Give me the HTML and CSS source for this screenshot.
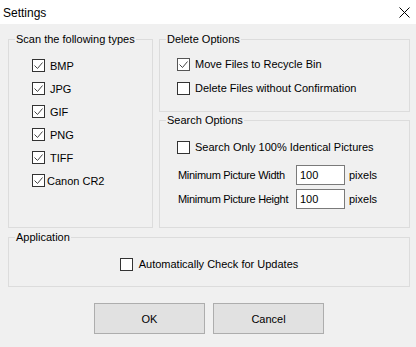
FILE: index.html
```html
<!DOCTYPE html>
<html lang="en">
<head>
  <meta charset="UTF-8" />
  <title>Settings</title>
  <link rel="stylesheet" href="styles.css">
</head>
<body>

  <div class="titlebar">
    <span class="title">Settings</span>
    <svg class="close" width="11" height="11" viewBox="0 0 11 11">
      <path d="M0.5 0.5 L10.5 10.5 M10.5 0.5 L0.5 10.5" stroke="#000" stroke-width="1" fill="none" />
    </svg>
  </div>

  <div class="dialog">
    <div class="top">
      <!-- Tipos de archivo -->
      <fieldset class="group types">
        <legend>Scan the following types</legend>
        <div class="list">
          <label class="opt"><span class="box"><svg viewBox="0 0 11 11"><path d="M1.5 5.5 L4.5 8.5 L9.5 2.5" /></svg></span>BMP</label>
          <label class="opt"><span class="box"><svg viewBox="0 0 11 11"><path d="M1.5 5.5 L4.5 8.5 L9.5 2.5" /></svg></span>JPG</label>
          <label class="opt"><span class="box"><svg viewBox="0 0 11 11"><path d="M1.5 5.5 L4.5 8.5 L9.5 2.5" /></svg></span>GIF</label>
          <label class="opt"><span class="box"><svg viewBox="0 0 11 11"><path d="M1.5 5.5 L4.5 8.5 L9.5 2.5" /></svg></span>PNG</label>
          <label class="opt"><span class="box"><svg viewBox="0 0 11 11"><path d="M1.5 5.5 L4.5 8.5 L9.5 2.5" /></svg></span>TIFF</label>
          <label class="opt tight"><span class="box"><svg viewBox="0 0 11 11"><path d="M1.5 5.5 L4.5 8.5 L9.5 2.5" /></svg></span>Canon CR2</label>
        </div>
      </fieldset>

      <div class="side">
        <fieldset class="group delete">
          <legend>Delete Options</legend>
          <div class="list">
            <label class="opt"><span class="box soft"><svg viewBox="0 0 11 11"><path d="M1.5 5.5 L4.5 8.5 L9.5 2.5" /></svg></span>Move Files to Recycle Bin</label>
            <label class="opt"><span class="box"></span>Delete Files without Confirmation</label>
          </div>
        </fieldset>

        <fieldset class="group search">
          <legend>Search Options</legend>
          <div class="list">
            <label class="opt"><span class="box"></span>Search Only 100% Identical Pictures</label>
            <div class="field">
              <span class="field-label">Minimum Picture Width</span>
              <input type="text" value="100" />
              <span>pixels</span>
            </div>
            <div class="field">
              <span class="field-label">Minimum Picture Height</span>
              <input type="text" value="100" />
              <span>pixels</span>
            </div>
          </div>
        </fieldset>
      </div>
    </div>

    <fieldset class="group app">
      <legend>Application</legend>
      <div class="list centered">
        <label class="opt"><span class="box"></span>Automatically Check for Updates</label>
      </div>
    </fieldset>

    <div class="buttons">
      <button>OK</button>
      <button>Cancel</button>
    </div>
  </div>

</body>
</html>
```

FILE: styles.css
```css
body {
  font-family: 'Liberation Sans', Arial, sans-serif;
  font-size: 11px;
  color: #000;
  background-color: #f0f0f0;
  margin: 0;
  padding: 0;
  width: 416px;
  height: 347px;
  overflow: hidden;
}
.titlebar {
  height: 24px;
  background: white;
  display: flex;
  align-items: center;
  justify-content: space-between;
  padding: 0 6px 0 3px;
}
.title {
  font-size: 12px;
  padding-top: 1px;
}
.close {
  display: block;
  margin-top: 1px;
}
.dialog {
  padding: 8px 6px 0 8px;
}
.top {
  display: flex;
  gap: 6px;
}
.group {
  margin: 0;
  padding: 0;
  min-width: 0;
  border: 1px solid #dcdcdc;
  box-sizing: border-box;
}
.group legend {
  margin-left: 6px;
  padding: 0 1px;
  line-height: 14px;
}
.types {
  width: 145px;
  height: 196px;
}
.types .list {
  padding: 8px 0 0 23px;
}
.types .opt {
  height: 23px;
}
.side {
  flex: 1;
  display: flex;
  flex-direction: column;
  gap: 1px;
}
.delete {
  height: 80px;
}
.delete .list {
  padding: 6px 0 0 17px;
}
.delete .opt {
  height: 24px;
}
.search {
  height: 115px;
}
.search .list {
  padding: 8px 0 0 17px;
}
.search .opt {
  height: 24px;
  margin-bottom: 4px;
}
.app {
  margin-top: 2px;
  height: 57px;
}
.app .list {
  padding-top: 8px;
}
.centered {
  display: flex;
  justify-content: center;
}
.app .opt {
  height: 24px;
  gap: 6px;
}
.opt {
  display: flex;
  align-items: center;
  gap: 5px;
}
.opt.tight {
  gap: 2px;
}
.box {
  width: 13px;
  height: 13px;
  box-sizing: border-box;
  border: 1px solid #333;
  background: white;
  display: flex;
  align-items: center;
  justify-content: center;
}
.box.soft {
  border-color: #555;
}
.box svg {
  width: 11px;
  height: 11px;
  display: block;
}
.box path {
  fill: none;
  stroke: #444;
  stroke-width: 1;
}
.field {
  display: flex;
  align-items: center;
  height: 24px;
  padding-left: 1px;
}
.field-label {
  width: 118px;
  white-space: nowrap;
  letter-spacing: -0.3px;
}
.field input {
  width: 49px;
  height: 20px;
  box-sizing: border-box;
  border: 1px solid #7a7a7a;
  background: white;
  font-family: inherit;
  font-size: 11px;
  padding: 0 3px;
  margin-right: 4px;
  outline: none;
}
.buttons {
  display: flex;
  justify-content: center;
  gap: 8px;
  margin-top: 16px;
}
button {
  width: 111px;
  height: 31px;
  background-color: #e1e1e1;
  border: 1px solid #adadad;
  font-family: inherit;
  font-size: 11px;
  color: #000;
  padding: 0;
}
```
